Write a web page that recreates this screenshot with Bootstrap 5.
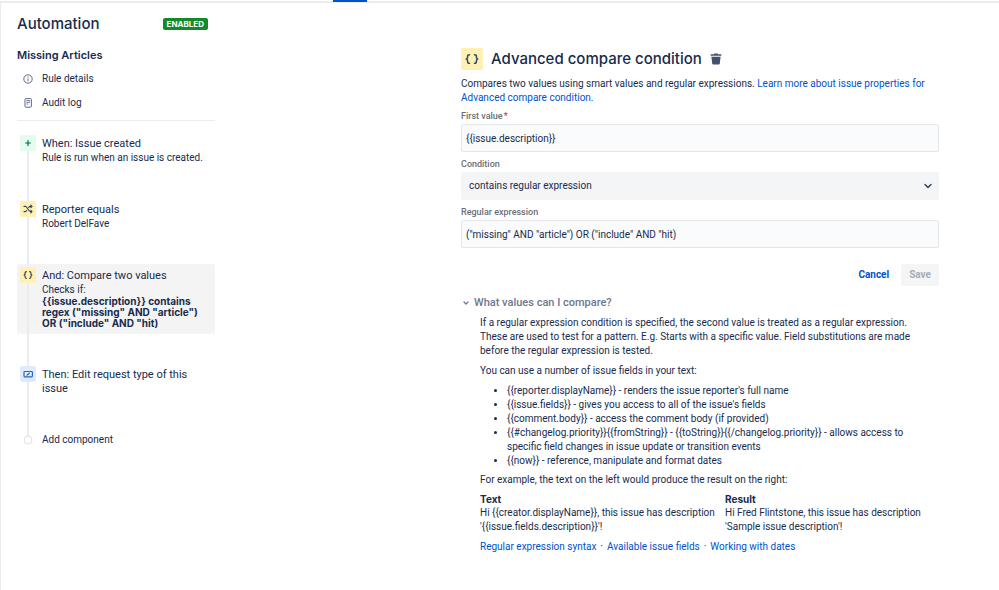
<!DOCTYPE html>
<html lang="en">
<head>
<meta charset="utf-8">
<meta name="viewport" content="width=device-width, initial-scale=1">
<title>Automation</title>
<link href="https://cdn.jsdelivr.net/npm/bootstrap@5.3.0/dist/css/bootstrap.min.css" rel="stylesheet">
<style>
:root { --ink: #172b4d; --link: #0052cc; --line: #ebecf0; --display: Inter, "Liberation Sans", sans-serif; }
body { font-family: Roboto, "Liberation Sans", sans-serif; font-size: 10px; line-height: 14px; color: var(--ink); background: #fff; }
a { color: var(--link); text-decoration: none; }
a:hover { text-decoration: underline; }
.app-top { height: 3px; border-bottom: 2px solid var(--line); padding-left: 333px; }
.app-top a { display: block; width: 34px; height: 2px; background: var(--link); }
.app-body { border-left: 1px solid var(--line); min-height: calc(100vh - 3px); }
.side-col { flex: 0 0 400px; padding: 12px 0 0 16px; }
.side-inner { width: 198px; }
.page-title { font-family: var(--display); font-size: 15px; line-height: 18px; font-weight: 500; }
.status-tag { font-family: var(--display); font-size: 8px; line-height: 12px; font-weight: 700; background: #14892c; border-radius: 2px; padding: 0 4px; margin-right: 7px; }
.rule-name { font-family: var(--display); font-size: 11px; line-height: 14px; font-weight: 600; margin: 15px 0 10px; }
.side-link { color: var(--ink); gap: 8px; padding-left: 5px; }
.side-links { gap: 10px; padding-bottom: 10px; border-bottom: 1px solid var(--line); margin-bottom: 11px; }
.steps { --rail: linear-gradient(var(--line), var(--line)); }
.steps li { padding-bottom: 29px; }
.steps li, .step-card { background: var(--rail) 10px 0 / 2px 100% no-repeat; }
.steps li:first-child, .steps li:first-child .step-card { background-position: 10px 6px; }
.step-card { padding: 3px; gap: 6px; border-radius: 3px; }
.steps .step-card.current { background-color: #f4f4f4; }
.steps li:last-child, .steps li:last-child .step-card { background-size: 2px 6px; }
.step-icon { width: 16px; height: 16px; border-radius: 2px; flex: none; }
.step-text { padding: 2px 0; line-height: 13px; }
.step-title { font-size: 11px; line-height: 14px; }
.step-text strong { font-family: var(--display); line-height: 11px; font-weight: 700; }
.tint-green { background: #e3fcef; } .tint-yellow { background: #fff0b3; } .tint-blue { background: #deebff; }
.main-col { padding: 45px 60px 0 60px; min-width: 0; }
.main-head { margin-bottom: 7px; }
.head-icon { width: 22px; height: 22px; border-radius: 2px; }
.form-label { font-size: 9px; line-height: 12px; font-weight: 500; color: #6b6e76; margin: 0 0 2px; }
.form-control, .form-select { font-size: 10px; line-height: 16px; height: 28px; padding: 5px; color: var(--ink); border-radius: 2px; border: 1px solid #e4e6ea; }
.form-control { background: #fafbfc; padding: 5px 4px; }
.form-select { background-color: #f4f5f7; border-color: #f4f5f7; padding: 5px 24px 5px 7px; background-image: none; }
.select-wrap svg { position: absolute; right: 6px; top: 9px; pointer-events: none; }
.intro { margin-bottom: 5px; }
.field-row { margin-bottom: 6px; }
.required-mark { color: #de350b; margin-left: 1px; }
.btn { font-size: 10px; line-height: 14px; font-weight: 700; padding: 4px 8px; border: 0; border-radius: 2px; }
.btn-cancel { color: var(--link); }
.btn-save:disabled { background: #f5f5f6; color: #a5adba; opacity: 1; }
.help-toggle { background: none; border: 0; padding: 0; margin-top: 10px; gap: 3px; color: #6b778c; font-size: 11px; font-weight: 500; }
.help-body { padding: 6px 15px 0 19px; }
.help-body p { margin-bottom: 6px; }
.help-body ul { margin-bottom: 5px; padding-left: 27px; }
.help-body .help-example { margin-bottom: 5px; }
.example-table { width: 100%; margin-bottom: 6px; }
.example-table th { font-family: var(--display); font-weight: 700; }
.example-table th, .example-table td { padding: 0; vertical-align: top; }
.example-table th:first-child { width: 245px; }
</style>
</head>
<body>
<nav class="app-top" aria-label="Product"><a href="#" aria-label="Current section"></a></nav>
<div class="app-body d-flex">
  <aside class="side-col">
    <div class="side-inner">
      <div class="d-flex align-items-center justify-content-between">
        <h1 class="page-title mb-0">Automation</h1>
        <span class="status-tag text-white">ENABLED</span>
      </div>
      <h2 class="rule-name">Missing Articles</h2>
      <div class="side-links d-flex flex-column">
        <a class="side-link d-flex align-items-center" href="#">
          <svg width="12" height="14" viewBox="0 0 12 14" fill="none" stroke="#5e6c84"><circle cx="6" cy="7" r="4.2"/><path d="M6 6.4v2.8M6 4.6v1"/></svg>
          Rule details</a>
        <a class="side-link d-flex align-items-center" href="#">
          <svg width="12" height="14" viewBox="0 0 12 14" fill="none" stroke="#5e6c84"><rect x="3" y="2.6" width="6.4" height="8.6" rx=".8"/><path d="M4.5 4.6h3.6M4.5 6.3h3.6M4.5 8h1.6" stroke-width=".9"/></svg>
          Audit log</a>
      </div>
      <ol class="steps list-unstyled mb-0">
        <li><div class="step-card d-flex">
          <span class="step-icon tint-green"><svg class="d-block" width="16" height="16" viewBox="0 0 16 16" stroke="#00704a" stroke-width="1.2" stroke-linecap="round"><path d="M8 5.6v4.8M5.6 8h4.8"/></svg></span>
          <div class="step-text"><div class="step-title">When: Issue created</div>Rule is run when an issue is created.</div>
        </div></li>
        <li><div class="step-card d-flex">
          <span class="step-icon tint-yellow"><svg class="d-block" width="16" height="16" viewBox="0 0 16 16" fill="none" stroke="#344563" stroke-width="1.1" stroke-linecap="round" stroke-linejoin="round"><path d="M4 5.4h1.4c2 0 3 5.2 5 5.2H12M4 10.6h1.2c.7 0 1.2-.5 1.6-1.2M8.7 6.5c.4-.7.9-1.1 1.7-1.1H12M10.8 4.2 12 5.4l-1.2 1.2M10.8 9.4l1.2 1.2-1.2 1.2"/></svg></span>
          <div class="step-text"><div class="step-title">Reporter equals</div>Robert DelFave</div>
        </div></li>
        <li><div class="step-card current d-flex">
          <span class="step-icon tint-yellow"><svg class="d-block" width="16" height="16" viewBox="0 0 16 16" fill="none" stroke="#344563" stroke-width="1.2" stroke-linecap="round" stroke-linejoin="round"><path d="M6.4 4.7c-1 0-1.3.4-1.3 1.2v.8c0 .7-.3 1.1-1 1.3.7.2 1 .6 1 1.3v.8c0 .8.3 1.2 1.3 1.2M9.6 4.7c1 0 1.3.4 1.3 1.2v.8c0 .7.3 1.1 1 1.3-.7.2-1 .6-1 1.3v.8c0 .8-.3 1.2-1.3 1.2"/></svg></span>
          <div class="step-text"><div class="step-title">And: Compare two values</div>Checks if:<strong class="d-block">{{issue.description}} contains regex ("missing" AND "article") OR ("include" AND "hit)</strong></div>
        </div></li>
        <li><div class="step-card d-flex">
          <span class="step-icon tint-blue"><svg class="d-block" width="16" height="16" viewBox="0 0 16 16" fill="none" stroke="#2f63c0" stroke-width="1.2" stroke-linecap="round"><rect x="4" y="5.5" width="8.4" height="5.4" rx=".8"/><path d="M7 9.2l2.4-2"/></svg></span>
          <div class="step-text"><div class="step-title">Then: Edit request type of this issue</div></div>
        </div></li>
        <li><div class="step-card d-flex">
          <span class="step-icon"><svg class="d-block" width="16" height="14" viewBox="0 0 16 14" fill="#fff" stroke="#dfe1e6"><circle cx="8" cy="7" r="4"/></svg></span>
          <div>Add component</div>
        </div></li>
      </ol>
    </div>
  </aside>
  <main class="main-col flex-fill">
    <div class="main-head d-flex align-items-center">
      <span class="head-icon tint-yellow me-2"><svg class="d-block" width="22" height="22" viewBox="0 0 22 22" fill="none" stroke="#344563" stroke-width="1.5" stroke-linecap="round" stroke-linejoin="round"><path d="M8.500 6.700c-1.400 0-1.900.5-1.900 1.600v.9c0 1-.4 1.500-1.300 1.800.9.300 1.300.8 1.300 1.800v.9c0 1.100.5 1.600 1.900 1.600M13.500 6.700c1.400 0 1.900.5 1.900 1.600v.9c0 1 .4 1.500 1.300 1.800-.9.300-1.300.8-1.300 1.800v.9c0 1.100-.5 1.600-1.900 1.600"/></svg></span>
      <h2 class="page-title mb-0 me-2">Advanced compare condition</h2>
      <button type="button" class="btn p-0" aria-label="Delete condition"><svg class="d-block" width="12" height="14" viewBox="1 0 12 14" fill="#42526e"><path d="M5.200 1.400h3.600v.9h3c.4 0 .6.300.6.700v.8H1.600V3c0-.4.200-.7.600-.7h3zM2.400 4.800h9.200l-.8 6.700c-.1.700-.6 1.100-1.300 1.100h-5c-.7 0-1.200-.4-1.300-1.100z"/></svg></button>
    </div>
    <p class="intro">Compares two values using smart values and regular expressions. <a href="#">Learn more about issue properties for Advanced compare condition.</a></p>
    <form>
      <div class="field-row">
        <label class="form-label d-block" for="first">First value<span class="required-mark">*</span></label>
        <input class="form-control" id="first" type="text" value="{{issue.description}}">
      </div>
      <div class="field-row">
        <label class="form-label d-block" for="cond">Condition</label>
        <div class="select-wrap position-relative">
          <select class="form-select" id="cond"><option>contains regular expression</option></select>
          <svg width="10" height="10" viewBox="0 0 10 10" fill="none" stroke="#344563" stroke-width="1.5" stroke-linecap="round" stroke-linejoin="round"><path d="M2 3.500l3 3 3-3"/></svg>
        </div>
      </div>
      <div>
        <label class="form-label d-block" for="regex">Regular expression</label>
        <input class="form-control" id="regex" type="text" value="(&quot;missing&quot; AND &quot;article&quot;) OR (&quot;include&quot; AND &quot;hit)">
      </div>
      <div class="d-flex justify-content-end gap-1 mt-3">
        <button type="button" class="btn btn-cancel">Cancel</button>
        <button type="submit" class="btn btn-save" disabled>Save</button>
      </div>
    </form>
    <button type="button" class="help-toggle d-flex align-items-center" data-bs-toggle="collapse" data-bs-target="#help" aria-expanded="true" aria-controls="help">
      <svg width="10" height="10" viewBox="0 0 10 10" fill="none" stroke="currentColor" stroke-width="1.3" stroke-linecap="round" stroke-linejoin="round"><path d="M3 4l2 2 2-2"/></svg>
      What values can I compare?</button>
    <div class="collapse show" id="help"><div class="help-body">
      <p>If a regular expression condition is specified, the second value is treated as a regular expression. These are used to test for a pattern. E.g. Starts with a specific value. Field substitutions are made before the regular expression is tested.</p>
      <p>You can use a number of issue fields in your text:</p>
      <ul>
        <li>{{reporter.displayName}} - renders the issue reporter's full name</li>
        <li>{{issue.fields}} - gives you access to all of the issue's fields</li>
        <li>{{comment.body}} - access the comment body (if provided)</li>
        <li>{{#changelog.priority}}{{fromString}} - {{toString}}{{/changelog.priority}} - allows access to specific field changes in issue update or transition events</li>
        <li>{{now}} - reference, manipulate and format dates</li>
      </ul>
      <p class="help-example">For example, the text on the left would produce the result on the right:</p>
      <table class="example-table">
        <thead><tr><th scope="col">Text</th><th scope="col">Result</th></tr></thead>
        <tbody><tr><td>Hi {{creator.displayName}}, this issue has description<br>'{{issue.fields.description}}'!</td><td>Hi Fred Flintstone, this issue has description<br>'Sample issue description'!</td></tr></tbody>
      </table>
      <div class="d-flex gap-1"><a href="#">Regular expression syntax</a><span>·</span><a href="#">Available issue fields</a><span>·</span><a href="#">Working with dates</a></div>
    </div></div>
  </main>
</div>
<script src="https://cdn.jsdelivr.net/npm/bootstrap@5.3.0/dist/js/bootstrap.bundle.min.js"></script>
</body>
</html>
